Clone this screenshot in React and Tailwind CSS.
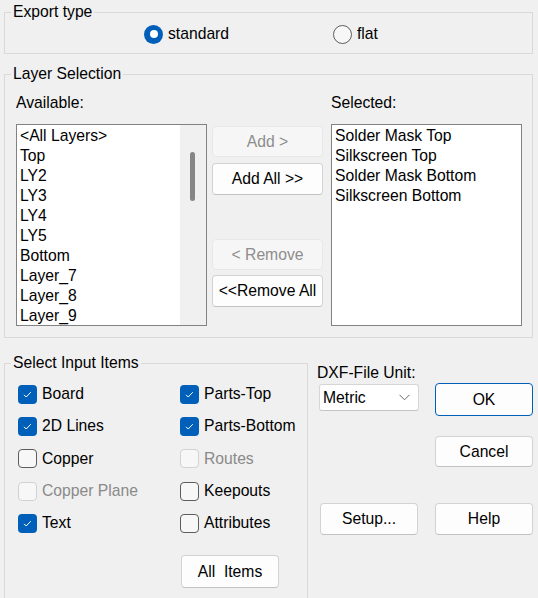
import React from 'react';

const Group = ({ label, className = '', children }) => (
  <div className={`border border-[#d9d9d9] ${className}`}>
    <div className="-mt-[10px] ml-[6px] px-[2px] w-fit bg-[#f0f0f0] leading-[18px]">{label}</div>
    {children}
  </div>
);

const Radio = ({ checked, label }) => (
  <div className="flex items-center gap-[5px] w-[189px]">
    {checked ? (
      <span className="w-[19px] h-[19px] rounded-full bg-[#005fb8] flex items-center justify-center">
        <span className="w-[8px] h-[8px] rounded-full bg-white" />
      </span>
    ) : (
      <span className="w-[19px] h-[19px] rounded-full border border-[#5d5d5d] bg-[#f7f7f7]" />
    )}
    <span>{label}</span>
  </div>
);

const Checkbox = ({ checked, disabled, label }) => (
  <div className="flex items-center gap-[5px] h-[32.3px]">
    {checked ? (
      <span className="w-[19px] h-[19px] rounded-[4px] bg-[#005fb8] flex items-center justify-center">
        <svg width="19" height="19" viewBox="0 0 19 19">
          <polyline points="6,9.8 8.2,12 12.8,7.2" fill="none" stroke="white" strokeWidth="1" />
        </svg>
      </span>
    ) : (
      <span
        className={`w-[19px] h-[19px] rounded-[4px] border bg-[#f7f7f7] ${
          disabled ? 'border-[#d2d2d2]' : 'border-[#5d5d5d]'
        }`}
      />
    )}
    <span className={disabled ? 'text-[#8a8a8a]' : ''}>{label}</span>
  </div>
);

const Button = ({ children, disabled, primary, className = '' }) => (
  <div
    className={`flex items-center justify-center rounded-[4px] border ${
      disabled
        ? 'bg-[#f6f6f6] border-[#e8e8e8] text-[#8d8d8d]'
        : primary
        ? 'bg-[#fdfdfd] border-[#005fb8]'
        : 'bg-[#fdfdfd] border-[#d3d3d3] border-b-[#c2c2c2]'
    } ${className}`}
  >
    {children}
  </div>
);

const availableLayers = [
  '<All Layers>', 'Top', 'LY2', 'LY3', 'LY4', 'LY5', 'Bottom', 'Layer_7', 'Layer_8', 'Layer_9',
];

const selectedLayers = ['Solder Mask Top', 'Silkscreen Top', 'Solder Mask Bottom', 'Silkscreen Bottom'];

export default function App() {
  return (
    <div className="w-[538px] h-[598px] bg-[#f0f0f0] overflow-hidden pl-[4px] pt-[12px] text-[15.7px] leading-[18px] text-black font-['Liberation_Sans',Arial,sans-serif]">
      {/* Export type */}
      <Group label="Export type" className="w-[529px]">
        <div className="flex items-center h-[20px] mt-[3px] mb-[9px] pl-[139px]">
          <Radio checked label="standard" />
          <Radio label="flat" />
        </div>
      </Group>

      {/* Layer selection */}
      <Group label="Layer Selection" className="w-[529px] mt-[20px]">
        <div className="flex pl-[11px] mt-[11px] pb-[11px]">
          <div className="w-[191px]">
            <div className="h-[18px]">Available:</div>
            <div className="mt-[12px] h-[202px] border border-[#828282] bg-white flex overflow-hidden">
              <div className="flex-1 pl-[3px] pt-[1px] leading-[20px] overflow-hidden">
                {availableLayers.map((l) => (
                  <div key={l} className="whitespace-nowrap">{l}</div>
                ))}
              </div>
              <div className="w-[26px] bg-[#f0f0f0] pt-[27px]">
                <div className="ml-[10px] w-[5px] h-[49px] rounded-full bg-[#868686]" />
              </div>
            </div>
          </div>

          <div className="ml-[5px] w-[111px] pt-[32px]">
            <Button disabled className="h-[31px]">Add &gt;</Button>
            <Button className="h-[32px] mt-[6px]">Add All &gt;&gt;</Button>
            <Button disabled className="h-[31px] mt-[44px]">&lt; Remove</Button>
            <Button className="h-[32px] mt-[5px]">&lt;&lt;Remove All</Button>
          </div>

          <div className="ml-[8px] w-[191px]">
            <div className="h-[18px]">Selected:</div>
            <div className="mt-[12px] h-[202px] border border-[#828282] bg-white pl-[3px] pt-[1px] leading-[20px]">
              {selectedLayers.map((l) => (
                <div key={l} className="whitespace-nowrap">{l}</div>
              ))}
            </div>
          </div>
        </div>
      </Group>

      <div className="flex mt-[25px]">
        {/* Select input items */}
        <Group label="Select Input Items" className="w-[304px] h-[260px]">
          <div className="grid grid-cols-[162px_1fr] mt-[6px] pl-[13px]">
            <Checkbox checked label="Board" />
            <Checkbox checked label="Parts-Top" />
            <Checkbox checked label="2D Lines" />
            <Checkbox checked label="Parts-Bottom" />
            <Checkbox label="Copper" />
            <Checkbox disabled label="Routes" />
            <Checkbox disabled label="Copper Plane" />
            <Checkbox label="Keepouts" />
            <Checkbox checked label="Text" />
            <Checkbox label="Attributes" />
          </div>
          <Button className="w-[98px] h-[33px] mt-[16px] ml-[176px]">All&nbsp; Items</Button>
        </Group>

        {/* Unit and dialog buttons */}
        <div className="flex">
          <div className="ml-[9px] w-[111px]">
            <div className="mt-[1px] h-[18px] whitespace-nowrap">DXF-File Unit:</div>
            <div className="mt-[2px] ml-[2px] w-[100px] h-[27px] bg-white border border-[#d6d6d6] border-b-[#c4c4c4] rounded-[3px] flex items-center justify-between pl-[3px] pr-[8px]">
              <span>Metric</span>
              <svg width="11" height="7" viewBox="0 0 11 7">
                <polyline points="0.5,0.8 5.5,5.8 10.5,0.8" fill="none" stroke="#6a6a6a" strokeWidth="1" />
              </svg>
            </div>
            <Button className="mt-[92px] ml-[3px] w-[98px] h-[32px]">Setup...</Button>
          </div>
          <div className="ml-[7px] w-[98px]">
            <Button primary className="mt-[20px] h-[33px]">OK</Button>
            <Button className="mt-[20px] h-[31px]">Cancel</Button>
            <Button className="mt-[36px] h-[32px]">Help</Button>
          </div>
        </div>
      </div>
    </div>
  );
}
